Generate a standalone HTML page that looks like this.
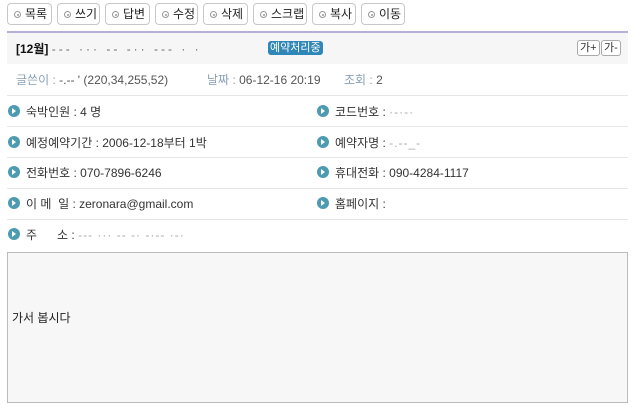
<!DOCTYPE html>
<html><head><meta charset="utf-8"><style>
*{margin:0;padding:0;box-sizing:border-box}
body{width:632px;height:407px;background:#fff;font-family:"Liberation Sans","Noto Sans CJK KR","NanumGothic",sans-serif;font-size:12px;color:#333;position:relative;overflow:hidden}
.a{position:absolute;white-space:nowrap}
.btn{position:absolute;top:3px;height:22px;border:1px solid #c8c8c8;border-radius:4px;background:#fff;font-size:12px;line-height:20px;padding-left:6px;color:#222}
.btn i{display:inline-block;width:7px;height:7px;border:1px solid #999;border-radius:50%;margin-right:4px;vertical-align:0px;position:relative}
.btn i:after{content:"";position:absolute;left:1.5px;top:1.5px;width:2px;height:2px;background:#999;border-radius:50%}
.dot{position:absolute;width:12px;height:12px;border-radius:50%;background:#4d9bb0;}
.dot:after{content:"";position:absolute;left:4px;top:3px;border-left:4px solid #fff;border-top:3px solid transparent;border-bottom:3px solid transparent}
.hr{position:absolute;left:7px;width:621px;height:1px;background:#e6e6e6}
.blur{color:#aaa;letter-spacing:1px}
.fb{position:absolute;top:40px;height:16px;border:1px solid #aaa;border-radius:3px;background:#fff;font-size:11px;line-height:14px;padding:0 2px;color:#333}
</style></head><body>
<div class="btn" style="left:7px;width:45px"><i></i>목록</div>
<div class="btn" style="left:57px;width:43px"><i></i>쓰기</div>
<div class="btn" style="left:105px;width:45px"><i></i>답변</div>
<div class="btn" style="left:155px;width:43px"><i></i>수정</div>
<div class="btn" style="left:203px;width:45px"><i></i>삭제</div>
<div class="btn" style="left:253px;width:54px"><i></i>스크랩</div>
<div class="btn" style="left:312px;width:44px"><i></i>복사</div>
<div class="btn" style="left:361px;width:44px"><i></i>이동</div>

<div class="a" style="left:7px;top:31px;width:621px;height:2px;background:#b5b0d8"></div>
<div class="a" style="left:7px;top:33px;width:621px;height:31px;background:#f6f6f6"></div>
<div class="a" style="left:16px;top:40px;font-weight:bold;font-size:12px;color:#111">[12월] <span style="font-weight:normal;color:#666;letter-spacing:3px">--- ··· -- -·· --- · ·</span></div>
<div class="a" style="left:268px;top:41px;background:#2f86b8;color:#fff;font-size:11px;line-height:14px;padding:0 2px;border-radius:3px">예약처리중</div>
<div class="fb" style="left:577px">가+</div>
<div class="fb" style="left:601px">가-</div>

<div class="a" style="left:16px;top:71px;color:#8aa0b5">글쓴이 : <span style="color:#555">-.-- ' (220,34,255,52)</span></div>
<div class="a" style="left:207px;top:71px;color:#8aa0b5">날짜 : <span style="color:#555">06-12-16 20:19</span></div>
<div class="a" style="left:344px;top:71px;color:#8aa0b5">조회 : <span style="color:#555">2</span></div>
<div class="hr" style="top:95px"></div>

<div class="dot" style="left:8px;top:105px"></div><div class="a" style="left:26px;top:103px">숙박인원 : 4 명</div>
<div class="dot" style="left:317px;top:105px"></div><div class="a" style="left:335px;top:103px">코드번호 : <span class="blur">·-·-·</span></div>
<div class="hr" style="top:126px"></div>
<div class="dot" style="left:8px;top:136px"></div><div class="a" style="left:26px;top:134px">예정예약기간 : 2006-12-18부터 1박</div>
<div class="dot" style="left:317px;top:136px"></div><div class="a" style="left:335px;top:134px">예약자명 : <span class="blur">-.--_-</span></div>
<div class="hr" style="top:157px"></div>
<div class="dot" style="left:8px;top:166px"></div><div class="a" style="left:26px;top:164px">전화번호 : 070-7896-6246</div>
<div class="dot" style="left:317px;top:166px"></div><div class="a" style="left:335px;top:164px">휴대전화 : 090-4284-1117</div>
<div class="hr" style="top:188px"></div>
<div class="dot" style="left:8px;top:197px"></div><div class="a" style="left:26px;top:195px">이 메&nbsp;&nbsp;일 : zeronara@gmail.com</div>
<div class="dot" style="left:317px;top:197px"></div><div class="a" style="left:335px;top:195px">홈페이지 :</div>
<div class="hr" style="top:219px"></div>
<div class="dot" style="left:8px;top:228px"></div><div class="a" style="left:26px;top:226px">주&nbsp;&nbsp;&nbsp;&nbsp;&nbsp;&nbsp;소 : <span class="blur">--- ··· -- -· -·-- ·-·</span></div>

<div class="a" style="left:7px;top:252px;width:621px;height:151px;background:#f7f7f7;border:1px solid #bbb"></div>
<div class="a" style="left:12px;top:309px;font-size:12px;color:#222">가서 봅시다</div>
</body></html>
